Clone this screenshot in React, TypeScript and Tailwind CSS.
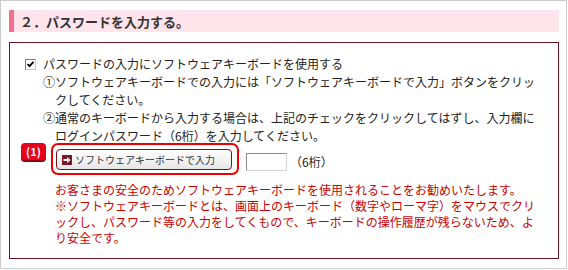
const Checkbox = () => (
  <span className="flex h-[11px] w-[11px] shrink-0 items-center justify-center border border-t-[#7a7a7a] border-l-[#7a7a7a] border-r-[#c8c8c8] border-b-[#c8c8c8] bg-white">
    <svg width="9" height="9" viewBox="0 0 9 9">
      <path d="M1.5 4 L3.5 6.2 L7.5 1.8" fill="none" stroke="#000" strokeWidth="1.8" />
    </svg>
  </span>
);

const ArrowIcon = () => (
  <span className="flex h-[10px] w-[10px] shrink-0 items-center justify-center bg-[#7d1828]">
    <svg width="8" height="8" viewBox="0 0 8 8">
      <path d="M0.5 3 H4 V1 L7.5 4 L4 7 V5 H0.5 Z" fill="#fff" />
    </svg>
  </span>
);

export default function App() {
  return (
    <div className="h-[270px] w-[568px] bg-white font-['Noto_Sans_CJK_JP',sans-serif]">
      <div className="h-[269px] w-[567px] border border-[#cccccc] pl-[8px] pt-[9px]">
        {/* section title */}
        <div className="flex h-[22px] w-[550px] items-center border-l-[5px] border-[#f2708c] bg-[#ffe4ec] pl-[6px] text-[13px] font-bold leading-none text-[#333]">
          ２．パスワードを入力する。
        </div>

        {/* input box */}
        <div className="mt-[10px] h-[217px] w-[550px] border border-[#6e1423] pt-[12px] text-[12px] text-[#222]">
          <div className="flex items-center pl-[15px] leading-[18px]">
            <Checkbox />
            <span className="ml-[7px] whitespace-nowrap">
              パスワードの入力にソフトウェアキーボードを使用する
            </span>
          </div>

          <div className="flex pl-[33px] leading-[18px]">
            <span className="w-[12px] shrink-0">①</span>
            <p className="whitespace-nowrap">
              ソフトウェアキーボードでの入力には「ソフトウェアキーボードで入力」ボタンをクリッ
              <br />
              クしてください。
            </p>
          </div>
          <div className="flex pl-[33px] leading-[18px]">
            <span className="w-[12px] shrink-0">②</span>
            <p className="whitespace-nowrap">
              通常のキーボードから入力する場合は、上記のチェックをクリックしてはずし、入力欄に
              <br />
              ログインパスワード（6桁）を入力してください。
            </p>
          </div>

          <div className="mt-[-2px] flex items-start pl-[11px]">
            <span className="flex h-[17px] w-[25px] items-center justify-center rounded-[4px] bg-[#e8001c] text-[11px] font-bold leading-none text-white shadow-[0_2px_0_#8c0010]">
              (1)
            </span>
            <div className="ml-[5px] h-[32px] w-[188px] rounded-[7px] border-2 border-[#ee0000] pl-[3px] pt-[4px]">
              <button className="flex h-[21px] w-[176px] items-center rounded-[4px] border border-[#6e1423] bg-gradient-to-b from-white to-[#e6e6e6] pl-[5px] text-[10px] leading-none text-[#333]">
                <ArrowIcon />
                <span className="ml-[3px]">ソフトウェアキーボードで入力</span>
              </button>
            </div>
            <input
              type="password"
              className="ml-[7px] mt-[10px] h-[18px] w-[41px] border border-t-[#8a8a8a] border-l-[#8a8a8a] border-r-[#d4d4d4] border-b-[#d4d4d4] bg-white outline-none"
            />
            <span className="ml-[3px] mt-[10px] leading-[18px]">（6桁）</span>
          </div>

          <p className="mt-[7px] whitespace-nowrap pl-[45px] leading-[16px] text-[#cc0000]">
            お客さまの安全のためソフトウェアキーボードを使用されることをお勧めいたします。
            <br />
            ※ソフトウェアキーボードとは、画面上のキーボード（数字やローマ字）をマウスでクリ
            <br />
            ックし、パスワード等の入力をしてくもので、キーボードの操作履歴が残らないため、よ
            <br />
            り安全です。
          </p>
        </div>
      </div>
    </div>
  );
}
